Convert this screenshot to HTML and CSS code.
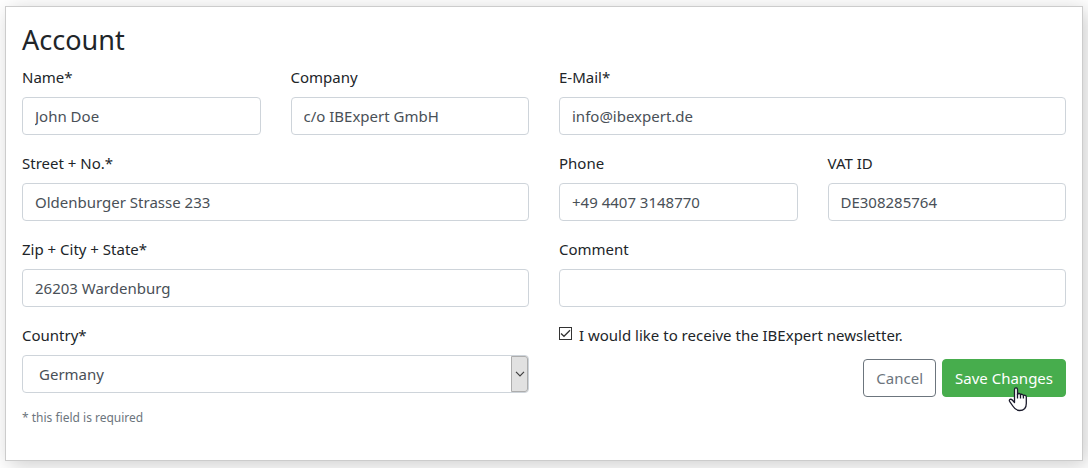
FILE: index.html
```html
<!DOCTYPE html>
<html lang="en">
  <head>
    <title>Account</title>
    <meta charset="utf-8" />
    <meta name="viewport" content="width=device-width, initial-scale=1" />
    <link rel="stylesheet" href="styles.css">
  </head>
  <body>
    <form class="card">
      <h3>Account</h3>

      <div class="form-row">
        <div class="form-group">
          <label for="name">Name*</label>
          <input class="form-control" type="text" id="name" value="John Doe">
        </div>
        <div class="form-group">
          <label for="company">Company</label>
          <input class="form-control" type="text" id="company" value="c/o IBExpert GmbH">
        </div>
        <div class="form-group wide">
          <label for="email">E-Mail*</label>
          <input class="form-control" type="email" id="email" value="info@ibexpert.de">
        </div>

        <div class="form-group wide">
          <label for="street">Street + No.*</label>
          <input class="form-control" type="text" id="street" value="Oldenburger Strasse 233">
        </div>
        <div class="form-group">
          <label for="phone">Phone</label>
          <input class="form-control" type="tel" id="phone" value="+49 4407 3148770">
        </div>
        <div class="form-group">
          <label for="vat">VAT ID</label>
          <input class="form-control" type="text" id="vat" value="DE308285764">
        </div>

        <div class="form-group wide">
          <label for="city">Zip + City + State*</label>
          <input class="form-control" type="text" id="city" value="26203 Wardenburg">
        </div>
        <div class="form-group wide">
          <label for="comment">Comment</label>
          <input class="form-control" type="text" id="comment">
        </div>

        <div class="form-group wide">
          <label for="country">Country*</label>
          <div class="select">
            <select class="form-control" id="country">
              <option selected>Germany</option>
            </select>
            <span class="select-arrow">
              <svg width="10" height="6" viewBox="0 0 10 6"><path d="M1 .8 5 4.8 9 .8" fill="none" stroke="#404040" stroke-width="1.2"/></svg>
            </span>
          </div>
        </div>
        <div class="wide">
          <div class="form-check">
            <input type="checkbox" id="newsletter" checked>
            <label for="newsletter">I would like to receive the IBExpert newsletter.</label>
          </div>
          <div class="buttons">
            <button type="button" class="btn btn-cancel">Cancel</button>
            <button type="submit" class="btn btn-save">
              Save Changes
              <svg class="pointer" width="20" height="25" viewBox="0 0 20 25">
                <path d="M6.5 15.5V2.5C6.5.4 9.5.4 9.5 2.5V7.5C10 6 12.5 6.2 12.5 8 13 6.8 15.3 7 15.3 8.8 16 7.8 18.3 8 18.3 10V16.5C18.3 21 15.5 23.5 11.500 23.500 8 23.500 6.500 21.800 4.800 19L1.600 14.300C.6 12.600 2.800 11.500 4.300 13Z" fill="#fff" stroke="#1a1a2b" stroke-width="1.3" stroke-linejoin="round"/>
                <path d="M9.5 7V11.5M12.5 8V11.5M15.4 9V11.5" fill="none" stroke="#1a1a2b" stroke-width="1.3"/>
              </svg>
            </button>
          </div>
        </div>
      </div>

      <small>* this field is required</small>
    </form>
  </body>
</html>
```
FILE: styles.css
```css
* {
  box-sizing: border-box;
}

body {
  margin: 0;
  padding: 6px 5px 7px;
  background: #fff;
  color: #212529;
  font-family: "Segoe UI", "Noto Sans", sans-serif;
  font-size: 15px;
  line-height: 24px;
}

.card {
  padding: 16px 16px 33px;
  background: #fff;
  border: 1px solid #ccc;
  box-shadow: 4px 4px 20px rgba(0, 0, 0, 0.2);
}

h3 {
  margin: 0 0 8px;
  font-size: 27px;
  font-weight: 400;
  line-height: 34px;
}

.form-row {
  display: grid;
  grid-template-columns: repeat(4, 1fr);
  gap: 16px 30px;
}

.wide {
  grid-column: span 2;
}

.form-group {
  min-width: 0;
}

.form-group label {
  display: block;
  margin-bottom: 8px;
}

.form-control {
  display: block;
  width: 100%;
  height: 38px;
  padding: 6px 12px;
  background: #fff;
  border: 1px solid #ced4da;
  border-radius: 4px;
  color: #495057;
  font: inherit;
}

.select {
  position: relative;
}

.select .form-control {
  padding-left: 16px;
  -webkit-appearance: none;
  appearance: none;
}

/* drop-down button on the right of the select */
.select-arrow {
  position: absolute;
  top: 1px;
  right: 1px;
  bottom: 1px;
  width: 17px;
  display: flex;
  align-items: center;
  justify-content: center;
  background: #e1e1e1;
  border: 1px solid #adadad;
  border-radius: 0 3px 3px 0;
  pointer-events: none;
}

.form-check {
  display: flex;
  align-items: center;
  gap: 7px;
  margin-bottom: 12px;
}

.form-check input {
  width: 13px;
  height: 13px;
  margin: 0 0 4px;
  -webkit-appearance: none;
  appearance: none;
  border: 1px solid #333;
  background: #fff;
}

.form-check input:checked {
  background: #fff url("data:image/svg+xml,%3Csvg xmlns='http://www.w3.org/2000/svg' viewBox='0 0 11 11'%3E%3Cpath d='M1 5.500 4 8.300 10 2.300' fill='none' stroke='%23333' stroke-width='1.300'/%3E%3C/svg%3E") center no-repeat;
}

.buttons {
  display: flex;
  justify-content: flex-end;
  gap: 6px;
}

.btn {
  position: relative;
  height: 38px;
  padding: 6px 12px;
  border: 1px solid;
  border-radius: 4px;
  font: inherit;
  cursor: pointer;
}

.btn-cancel {
  background: #fff;
  border-color: #6c757d;
  color: #6c757d;
}

.btn-save {
  background: #47ad4d;
  border-color: #47ad4d;
  color: #fff;
}

.pointer {
  position: absolute;
  right: 37px;
  bottom: -16px;
}

small {
  display: block;
  margin-top: 12px;
  color: #6c757d;
  font-size: 12px;
  line-height: 18px;
}
```
